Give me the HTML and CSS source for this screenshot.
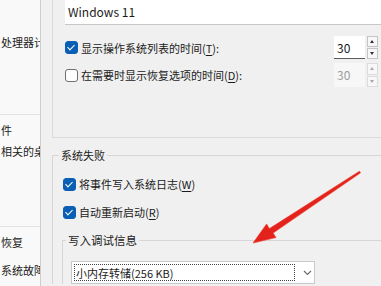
FILE: index.html
```html
<!DOCTYPE html>
<html lang="zh-CN">
<head>
    <meta charset="UTF-8">
    <meta name="viewport" content="width=device-width, initial-scale=1.0">
    <title>启动和故障恢复</title>
    <link rel="stylesheet" href="styles.css">
</head>
<body>

    <!-- 后面的系统属性窗口 -->
    <div class="behind">
        <div class="behind-item first">处理器计</div>
        <div class="behind-line"></div>
        <div class="behind-item gap-a">件</div>
        <div class="behind-item gap-b">相关的桌</div>
        <div class="behind-line second"></div>
        <div class="behind-item gap-a">恢复</div>
        <div class="behind-item gap-c">系统故障</div>
    </div>

    <!-- 启动和故障恢复对话框 -->
    <div class="dialog">
        <div class="group-top">
            <div class="textbox">Windows 11</div>

            <div class="row row-first">
                <span class="check checked"></span>
                <span class="label">显示操作系统列表的时间(<u>T</u>):</span>
                <div class="spin">
                    <div class="spin-field">30</div>
                    <div class="spin-btns">
                        <span class="spin-btn up"></span>
                        <span class="spin-btn down"></span>
                    </div>
                </div>
            </div>

            <div class="row row-second">
                <span class="check"></span>
                <span class="label">在需要时显示恢复选项的时间(<u>D</u>):</span>
                <div class="spin disabled">
                    <div class="spin-field">30</div>
                    <div class="spin-btns">
                        <span class="spin-btn up"></span>
                        <span class="spin-btn down"></span>
                    </div>
                </div>
            </div>
        </div>

        <fieldset class="failure">
            <legend>系统失败</legend>

            <div class="row row-w">
                <span class="check checked"></span>
                <span class="label">将事件写入系统日志(<u>W</u>)</span>
            </div>

            <div class="row row-r">
                <span class="check checked"></span>
                <span class="label">自动重新启动(<u>R</u>)</span>
            </div>

            <fieldset class="debug">
                <legend>写入调试信息</legend>
                <div class="select">
                    <span class="select-value">小内存转储(256 KB)</span>
                    <svg class="chevron" width="9" height="6" viewBox="0 0 9 6">
                        <path d="M1 1 L4.5 4.5 L8 1" fill="none" stroke="#6a6a6a" stroke-width="1.1"/>
                    </svg>
                </div>
            </fieldset>
        </fieldset>
    </div>

    <!-- 红色箭头标注 -->
    <svg class="arrow" width="381" height="286" viewBox="0 0 381 286">
        <polygon points="359.4,171.2 269.4,228.6 266.6,223.9 253,243 276,237.6 273.1,233.1 360.6,172.8"
                 fill="#e3231b" stroke="#ee3a30" stroke-width="0.6" stroke-linejoin="round"/>
    </svg>

</body>
</html>
```

FILE: styles.css
```css
body {
    margin: 0;
    width: 381px;
    height: 286px;
    overflow: hidden;
    display: flex;
    position: relative;
    font-family: "Noto Sans CJK SC", "Noto Sans", sans-serif;
    font-size: 11px;
    color: #1b1b1b;
    background-color: #f0f0f0;
}

/* 后面的窗口 */
.behind {
    width: 40px;
    flex-shrink: 0;
    background-color: #f9f9f9;
    overflow: hidden;
    white-space: nowrap;
}

.behind-item {
    line-height: 16px;
    padding-left: 1px;
}

.behind-item.first {
    margin-top: 34px;
}

.behind-item.gap-a {
    margin-top: 7px;
}

.behind-item.gap-b {
    margin-top: 5px;
}

.behind-item.gap-c {
    margin-top: 12px;
}

.behind-line {
    height: 1px;
    margin-top: 64px;
    background-color: #e2e2e2;
}

.behind-line.second {
    margin-top: 67px;
}

/* 对话框 */
.dialog {
    flex: 1;
    min-width: 0;
    background-color: #f0f0f0;
    border-left: 1px solid #cdcdcd;
    padding-left: 11px;
}

.group-top {
    height: 138px;
    box-sizing: border-box;
    border-left: 1px solid #dadada;
    border-bottom: 1px solid #dadada;
    padding-left: 12px;
}

.textbox {
    height: 24px;
    line-height: 24px;
    padding-left: 3px;
    background-color: #fff;
    border-bottom: 1px solid #c8c8c8;
    font-size: 12px;
}

.row {
    display: flex;
    align-items: center;
    padding-right: 3px;
}

.row-first {
    height: 23px;
    margin-top: 11px;
}

.row-second {
    height: 24px;
    margin-top: 4px;
}

.row-w {
    height: 20px;
    margin-top: 11px;
}

.row-r {
    height: 20px;
    margin-top: 8px;
}

.check {
    width: 11px;
    height: 11px;
    border: 1px solid #6f6f6f;
    border-radius: 3px;
    background-color: #fdfdfd;
    margin-right: 3px;
    position: relative;
    flex-shrink: 0;
}

.check.checked {
    background-color: #0a5fb4;
    border-color: #0a5fb4;
}

.check.checked::after {
    content: "";
    position: absolute;
    left: 3px;
    top: 1px;
    width: 3px;
    height: 6px;
    border: solid #fff;
    border-width: 0 1.5px 1.5px 0;
    transform: rotate(45deg);
}

.label u {
    text-underline-offset: 2px;
}

/* 数值框 */
.spin {
    margin-left: auto;
    display: flex;
    align-items: stretch;
    height: 100%;
}

.spin-field {
    width: 28px;
    padding-left: 3px;
    background-color: #fff;
    border-bottom: 1px solid #5c5c5c;
    display: flex;
    align-items: center;
    font-size: 12px;
}

.spin.disabled .spin-field {
    background-color: #f7f7f7;
    border-bottom-color: #f7f7f7;
    color: #9d9d9d;
}

.spin-btns {
    width: 11px;
    margin-left: 2px;
    display: flex;
    flex-direction: column;
    gap: 1px;
}

.spin-btn {
    flex: 1;
    border: 1px solid #c4c4c4;
    background-color: #f7f7f7;
    position: relative;
}

.spin-btn::after {
    content: "";
    position: absolute;
    left: 2px;
    top: 3px;
    border-left: 2.5px solid transparent;
    border-right: 2.5px solid transparent;
}

.spin-btn.up::after {
    border-bottom: 3px solid #333;
}

.spin-btn.down::after {
    border-top: 3px solid #333;
}

.spin.disabled .spin-btn {
    border-color: #dcdcdc;
}

.spin.disabled .spin-btn.up::after {
    border-bottom-color: #a8a8a8;
}

.spin.disabled .spin-btn.down::after {
    border-top-color: #a8a8a8;
}

/* 分组框 */
fieldset {
    margin: 0;
    min-width: 0;
    border: 1px solid #d6d6d6;
    border-right: none;
    border-bottom: none;
}

legend {
    line-height: 16px;
    padding: 0 2px;
    font-size: 11px;
}

.failure {
    margin-top: 9px;
    padding: 0 0 0 10px;
}

.failure > legend {
    margin-left: -4px;
}

.debug {
    margin: 10px 0 0 -1px;
    padding: 0 0 0 8px;
}

.debug > legend {
    margin-left: -5px;
    font-size: 11.5px;
}

.select {
    margin-top: 13px;
    width: 244px;
    height: 23px;
    box-sizing: border-box;
    background-color: #fff;
    border: 1px solid #c9c9c9;
    display: flex;
    align-items: center;
    padding: 2px;
}

.select-value {
    width: 222px;
    height: 17px;
    line-height: 16px;
    box-sizing: border-box;
    border: 1px dotted #444;
    padding-left: 1px;
    font-size: 11px;
}

.chevron {
    margin-left: 8px;
}

/* 标注箭头 */
.arrow {
    position: absolute;
    left: 0;
    top: 0;
    pointer-events: none;
}
```
